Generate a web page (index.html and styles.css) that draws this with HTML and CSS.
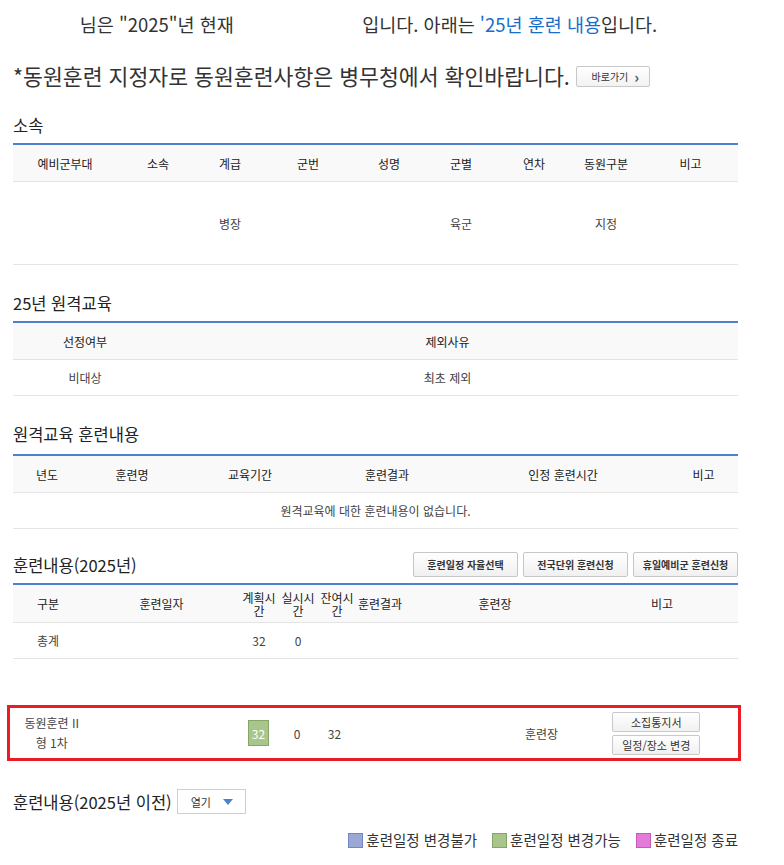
FILE: index.html
```html
<!DOCTYPE html>
<html lang="ko">
<head>
    <meta charset="UTF-8">
    <meta name="viewport" content="width=device-width, initial-scale=1.0">
    <title>예비군 훈련 내용</title>
    <link rel="stylesheet" href="styles.css">
</head>
<body>
    <div class="wrap">
        <p class="intro">님은 "2025"년 현재 <span class="name"></span> 입니다. 아래는 <span class="hl">'25년 훈련 내용</span>입니다.</p>

        <p class="notice">*동원훈련 지정자로 동원훈련사항은 병무청에서 확인바랍니다. <button class="btn-go">바로가기 <span class="arr">&#x203A;</span></button></p>

        <h3 class="sec-title">소속</h3>
        <table class="grid">
            <colgroup>
                <col style="width:104px"><col style="width:82px"><col style="width:62px"><col style="width:94px"><col style="width:68px"><col style="width:76px"><col style="width:70px"><col style="width:74px"><col>
            </colgroup>
            <thead>
                <tr><th>예비군부대</th><th>소속</th><th>계급</th><th>군번</th><th>성명</th><th>군별</th><th>연차</th><th>동원구분</th><th>비고</th></tr>
            </thead>
            <tbody>
                <tr class="tall"><td></td><td></td><td>병장</td><td></td><td></td><td>육군</td><td></td><td>지정</td><td></td></tr>
            </tbody>
        </table>

        <h3 class="sec-title sec-remote">25년 원격교육</h3>
        <table class="grid">
            <colgroup><col style="width:144px"><col></colgroup>
            <thead><tr><th>선정여부</th><th>제외사유</th></tr></thead>
            <tbody><tr><td>비대상</td><td>최초 제외</td></tr></tbody>
        </table>

        <h3 class="sec-title sec-remote">원격교육 훈련내용</h3>
        <table class="grid gap-lg">
            <colgroup>
                <col style="width:68px"><col style="width:102px"><col style="width:134px"><col style="width:140px"><col style="width:212px"><col>
            </colgroup>
            <thead><tr><th>년도</th><th>훈련명</th><th>교육기간</th><th>훈련결과</th><th>인정 훈련시간</th><th>비고</th></tr></thead>
            <tbody><tr><td colspan="6">원격교육에 대한 훈련내용이 없습니다.</td></tr></tbody>
        </table>

        <div class="title-row">
            <h3 class="sec-title">훈련내용(2025년)</h3>
            <div class="actions">
                <button class="btn">훈련일정 자율선택</button>
                <button class="btn">전국단위 훈련신청</button>
                <button class="btn">휴일예비군 훈련신청</button>
            </div>
        </div>
        <table class="grid">
            <colgroup>
                <col style="width:70px"><col style="width:157px"><col style="width:38px"><col style="width:40px"><col style="width:38px"><col style="width:48px"><col style="width:182px"><col>
            </colgroup>
            <thead>
                <tr class="hrs"><th>구분</th><th>훈련일자</th><th class="narrow">계획시<br>간</th><th class="narrow">실시시<br>간</th><th class="narrow">잔여시<br>간</th><th>훈련결과</th><th>훈련장</th><th>비고</th></tr>
            </thead>
            <tbody>
                <tr><td>총계</td><td></td><td>32</td><td>0</td><td></td><td></td><td></td><td></td></tr>
            </tbody>
        </table>

        <table class="grid picked">
            <colgroup>
                <col style="width:85px"><col style="width:145px"><col style="width:40px"><col style="width:37px"><col style="width:38px"><col style="width:155px"><col style="width:66px"><col>
            </colgroup>
            <tbody>
                <tr>
                    <td class="two-line">동원훈련 II<br>형 1차</td>
                    <td></td>
                    <td><span class="badge ok">32</span></td>
                    <td>0</td>
                    <td>32</td>
                    <td></td>
                    <td>훈련장</td>
                    <td>
                        <div class="stack">
                            <button class="btn-sm">소집통지서</button>
                            <button class="btn-sm">일정/장소 변경</button>
                        </div>
                    </td>
                </tr>
            </tbody>
        </table>

        <div class="past-row">
            <h3 class="sec-title">훈련내용(2025년 이전)</h3>
            <div class="select">열기 <span class="caret"></span></div>
        </div>

        <ul class="legend">
            <li><span class="sq fixed"></span>훈련일정 변경불가</li>
            <li><span class="sq ok"></span>훈련일정 변경가능</li>
            <li><span class="sq done"></span>훈련일정 종료</li>
        </ul>
    </div>
</body>
</html>
```

FILE: styles.css
```css
body {
    margin: 0;
    font-family: "Noto Sans CJK KR", "Noto Sans", sans-serif;
    color: #333;
    background: #fff;
}
.wrap {
    width: 725px;
    padding: 0 13px;
}
p, h3, ul {
    margin: 0;
}

.intro {
    margin-right: 14px;
    padding-top: 12px;
    font-size: 18.5px;
    line-height: 24px;
    text-align: center;
}
.intro .name {
    display: inline-block;
    width: 118px;
}
.hl {
    color: #1a6ecb;
}

.notice {
    margin-top: 26px;
    font-size: 21.6px;
    line-height: 28px;
    display: flex;
    align-items: center;
    gap: 6px;
}
.btn-go {
    width: 74px;
    height: 21px;
    padding: 0 0 0 5px;
    font-family: inherit;
    font-size: 10px;
    color: #333;
    border: 1px solid #c8c8c8;
    border-radius: 2px;
    background: linear-gradient(#fff, #f2f2f2);
    display: flex;
    align-items: center;
    justify-content: center;
    gap: 6px;
}
.btn-go .arr {
    font-size: 15px;
    line-height: 1;
    font-weight: bold;
    color: #555;
}

.sec-title {
    margin-top: 24px;
    font-size: 16.5px;
    font-weight: normal;
    line-height: 22px;
    color: #222;
}
.sec-remote {
    margin-top: 27px;
}

.grid {
    width: 725px;
    margin-top: 7px;
    border-collapse: collapse;
    table-layout: fixed;
    border-top: 2px solid #4f7fcd;
    font-size: 12px;
}
.grid.gap-lg {
    margin-top: 9px;
}
.grid th {
    height: 36px;
    padding: 0;
    font-weight: normal;
    color: #222;
    background: #f9f9f9;
    border-bottom: 1px solid #e4e4e4;
}
.grid td {
    height: 35px;
    padding: 0;
    text-align: center;
    color: #444;
    border-bottom: 1px solid #e4e4e4;
}
.grid .tall td {
    height: 82px;
}
.grid .hrs th {
    height: 37px;
}
.grid th.narrow {
    line-height: 13px;
}

.title-row {
    margin-top: 23px;
    display: flex;
    align-items: center;
    justify-content: space-between;
}
.title-row .sec-title,
.past-row .sec-title {
    margin-top: 0;
}
.actions {
    display: flex;
    gap: 5px;
}
.btn {
    width: 105px;
    height: 25px;
    padding: 0;
    font-family: inherit;
    font-size: 10px;
    font-weight: bold;
    color: #333;
    border: 1px solid #c6c6c6;
    border-radius: 2px;
    background: linear-gradient(#fff, #f0f0f0);
}
.title-row + .grid {
    margin-top: 6px;
}

.picked {
    width: 734px;
    margin: 46px 0 0 -6px;
    border: 3px solid #ec1c24;
}
.picked td {
    height: 50px;
    border-bottom: none;
}
.picked .two-line {
    line-height: 20px;
}
.badge {
    display: inline-block;
    width: 21px;
    height: 26px;
    line-height: 26px;
    font-size: 12px;
    color: #fff;
    box-sizing: border-box;
}
.badge.ok {
    background: #a8c58c;
    border: 1px solid #84a668;
}
.stack {
    display: flex;
    flex-direction: column;
    align-items: center;
    gap: 3px;
}
.btn-sm {
    width: 88px;
    height: 20px;
    padding: 0;
    font-family: inherit;
    font-size: 11px;
    color: #333;
    border: 1px solid #c8c8c8;
    border-radius: 2px;
    background: linear-gradient(#fff, #f0f0f0);
}

.past-row {
    margin-top: 28px;
    display: flex;
    align-items: center;
    gap: 5px;
}
.select {
    width: 69px;
    height: 25px;
    box-sizing: border-box;
    padding: 0 12px 0 13px;
    font-size: 11px;
    color: #333;
    border: 1px solid #cfcfcf;
    background: #fff;
    display: flex;
    align-items: center;
    justify-content: space-between;
}
.caret {
    width: 0;
    height: 0;
    border-left: 5px solid transparent;
    border-right: 5px solid transparent;
    border-top: 6px solid #4f7fcd;
}

.legend {
    margin-top: 17px;
    padding: 0;
    list-style: none;
    display: flex;
    justify-content: flex-end;
    gap: 15px;
    font-size: 14.5px;
    line-height: 18px;
}
.legend li {
    display: flex;
    align-items: center;
    gap: 3px;
}
.sq {
    width: 15px;
    height: 15px;
    box-sizing: border-box;
}
.sq.fixed {
    background: #9aa8d8;
    border: 1px solid #7585c2;
}
.sq.ok {
    background: #a8c58c;
    border: 1px solid #84a668;
}
.sq.done {
    background: #e47ad9;
    border: 1px solid #c45abb;
}
```
